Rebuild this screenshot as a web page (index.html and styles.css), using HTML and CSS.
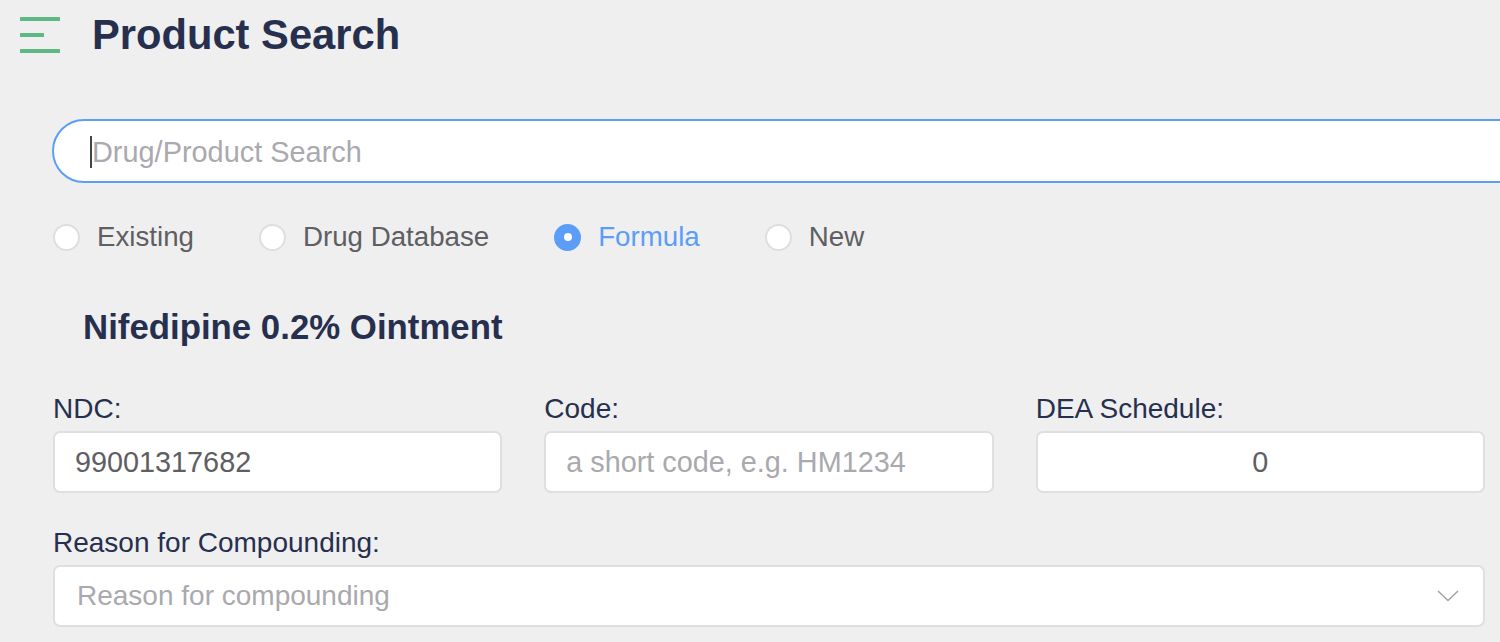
FILE: index.html
```html
<!DOCTYPE html>
<html>
<head>
<meta charset="utf-8">
<link rel="stylesheet" href="styles.css">
</head>
<body>
<header class="header">
  <svg class="menu-icon" width="40" height="36" viewBox="0 0 40 36">
    <rect x="0" y="0" width="40" height="4" fill="#5fb883"/>
    <rect x="0" y="16" width="24" height="4" fill="#5fb883"/>
    <rect x="0" y="32" width="40" height="4" fill="#5fb883"/>
  </svg>
  <h1 class="title">Product Search</h1>
</header>
<main class="content">
  <div class="search">
    <span class="caret"></span><span class="search-placeholder">Drug/Product Search</span>
  </div>
  <div class="radios">
    <div class="radio-item"><span class="radio"></span><span class="radio-label">Existing</span></div>
    <div class="radio-item"><span class="radio"></span><span class="radio-label">Drug Database</span></div>
    <div class="radio-item checked"><span class="radio"></span><span class="radio-label">Formula</span></div>
    <div class="radio-item"><span class="radio"></span><span class="radio-label">New</span></div>
  </div>
  <h2 class="product-name">Nifedipine 0.2% Ointment</h2>
  <div class="fields">
    <div class="field">
      <div class="label">NDC:</div>
      <div class="box"><span class="value">99001317682</span></div>
    </div>
    <div class="field">
      <div class="label">Code:</div>
      <div class="box"><span class="placeholder">a short code, e.g. HM1234</span></div>
    </div>
    <div class="field">
      <div class="label">DEA Schedule:</div>
      <div class="box center"><span class="value">0</span></div>
    </div>
  </div>
  <div class="field full">
    <div class="label">Reason for Compounding:</div>
    <div class="box select">
      <span class="placeholder">Reason for compounding</span>
      <svg class="chevron" width="22" height="12" viewBox="0 0 22 12">
        <polyline points="1,1 11,10.5 21,1" fill="none" stroke="#a3a3a8" stroke-width="1.6"/>
      </svg>
    </div>
  </div>
</main>
</body>
</html>
```
FILE: styles.css
```css
html, body {
  margin: 0;
  padding: 0;
  overflow: hidden;
}
body {
  background: #efefef;
  font-family: "Liberation Sans", Arial, sans-serif;
  width: 1500px;
  height: 642px;
}
.header {
  display: flex;
  align-items: center;
  height: 70px;
  padding-left: 20px;
}
.menu-icon {
  display: block;
  flex: none;
}
.title {
  margin: 0 0 0 32px;
  font-size: 41.7px;
  line-height: 50px;
  font-weight: bold;
  color: #272f4e;
}
.content {
  padding-left: 52px;
}
.search {
  margin-top: 49px;
  width: 1480px;
  height: 64px;
  box-sizing: border-box;
  border: 2px solid #5b9df9;
  border-radius: 32px;
  background: #fff;
  display: flex;
  align-items: center;
  padding-left: 36px;
}
.caret {
  width: 2px;
  height: 32px;
  background: #444;
  margin-top: 2px;
}
.search-placeholder {
  font-size: 28.9px;
  color: #a9a9ae;
  margin-top: 2px;
}
.radios {
  display: flex;
  align-items: center;
  gap: 65px;
  margin-top: 40px;
  height: 28px;
  padding-left: 1px;
}
.radio-item {
  display: flex;
  align-items: center;
  gap: 17px;
}
.radio {
  width: 27px;
  height: 27px;
  box-sizing: border-box;
  border-radius: 50%;
  border: 2px solid #dedee2;
  background: #fff;
  position: relative;
}
.radio-label {
  font-size: 27.7px;
  color: #5e5e63;
}
.radio-item.checked .radio {
  background: #5b9df9;
  border-color: #5b9df9;
}
.radio-item.checked .radio::after {
  content: "";
  position: absolute;
  left: 50%;
  top: 50%;
  width: 8px;
  height: 8px;
  margin: -4px 0 0 -4px;
  border-radius: 50%;
  background: #fff;
}
.radio-item.checked .radio-label {
  color: #5b9df9;
}
.product-name {
  margin: 56px 0 0 31px;
  font-size: 34.8px;
  line-height: 40px;
  font-weight: bold;
  color: #272f4e;
}
.fields {
  display: grid;
  grid-template-columns: repeat(3, 1fr);
  column-gap: 42px;
  margin-top: 45px;
  margin-left: 1px;
  width: 1432px;
}
.field.full {
  margin-top: 33px;
  margin-left: 1px;
  width: 1432px;
}
.label {
  font-size: 28px;
  line-height: 34px;
  color: #272f4e;
  margin-bottom: 5px;
}
.box {
  height: 62px;
  box-sizing: border-box;
  border: 2px solid #dfdfe3;
  border-radius: 7px;
  background: #fff;
  display: flex;
  align-items: center;
  padding-left: 20px;
  font-size: 28.8px;
}
.box.center {
  justify-content: center;
  padding-left: 0;
}
.value {
  color: #5e5e63;
}
.placeholder {
  color: #a9a9ae;
}
.box.select {
  font-size: 28px;
  padding-left: 22px;
  padding-right: 24px;
  justify-content: space-between;
}
.chevron {
  display: block;
}
```
